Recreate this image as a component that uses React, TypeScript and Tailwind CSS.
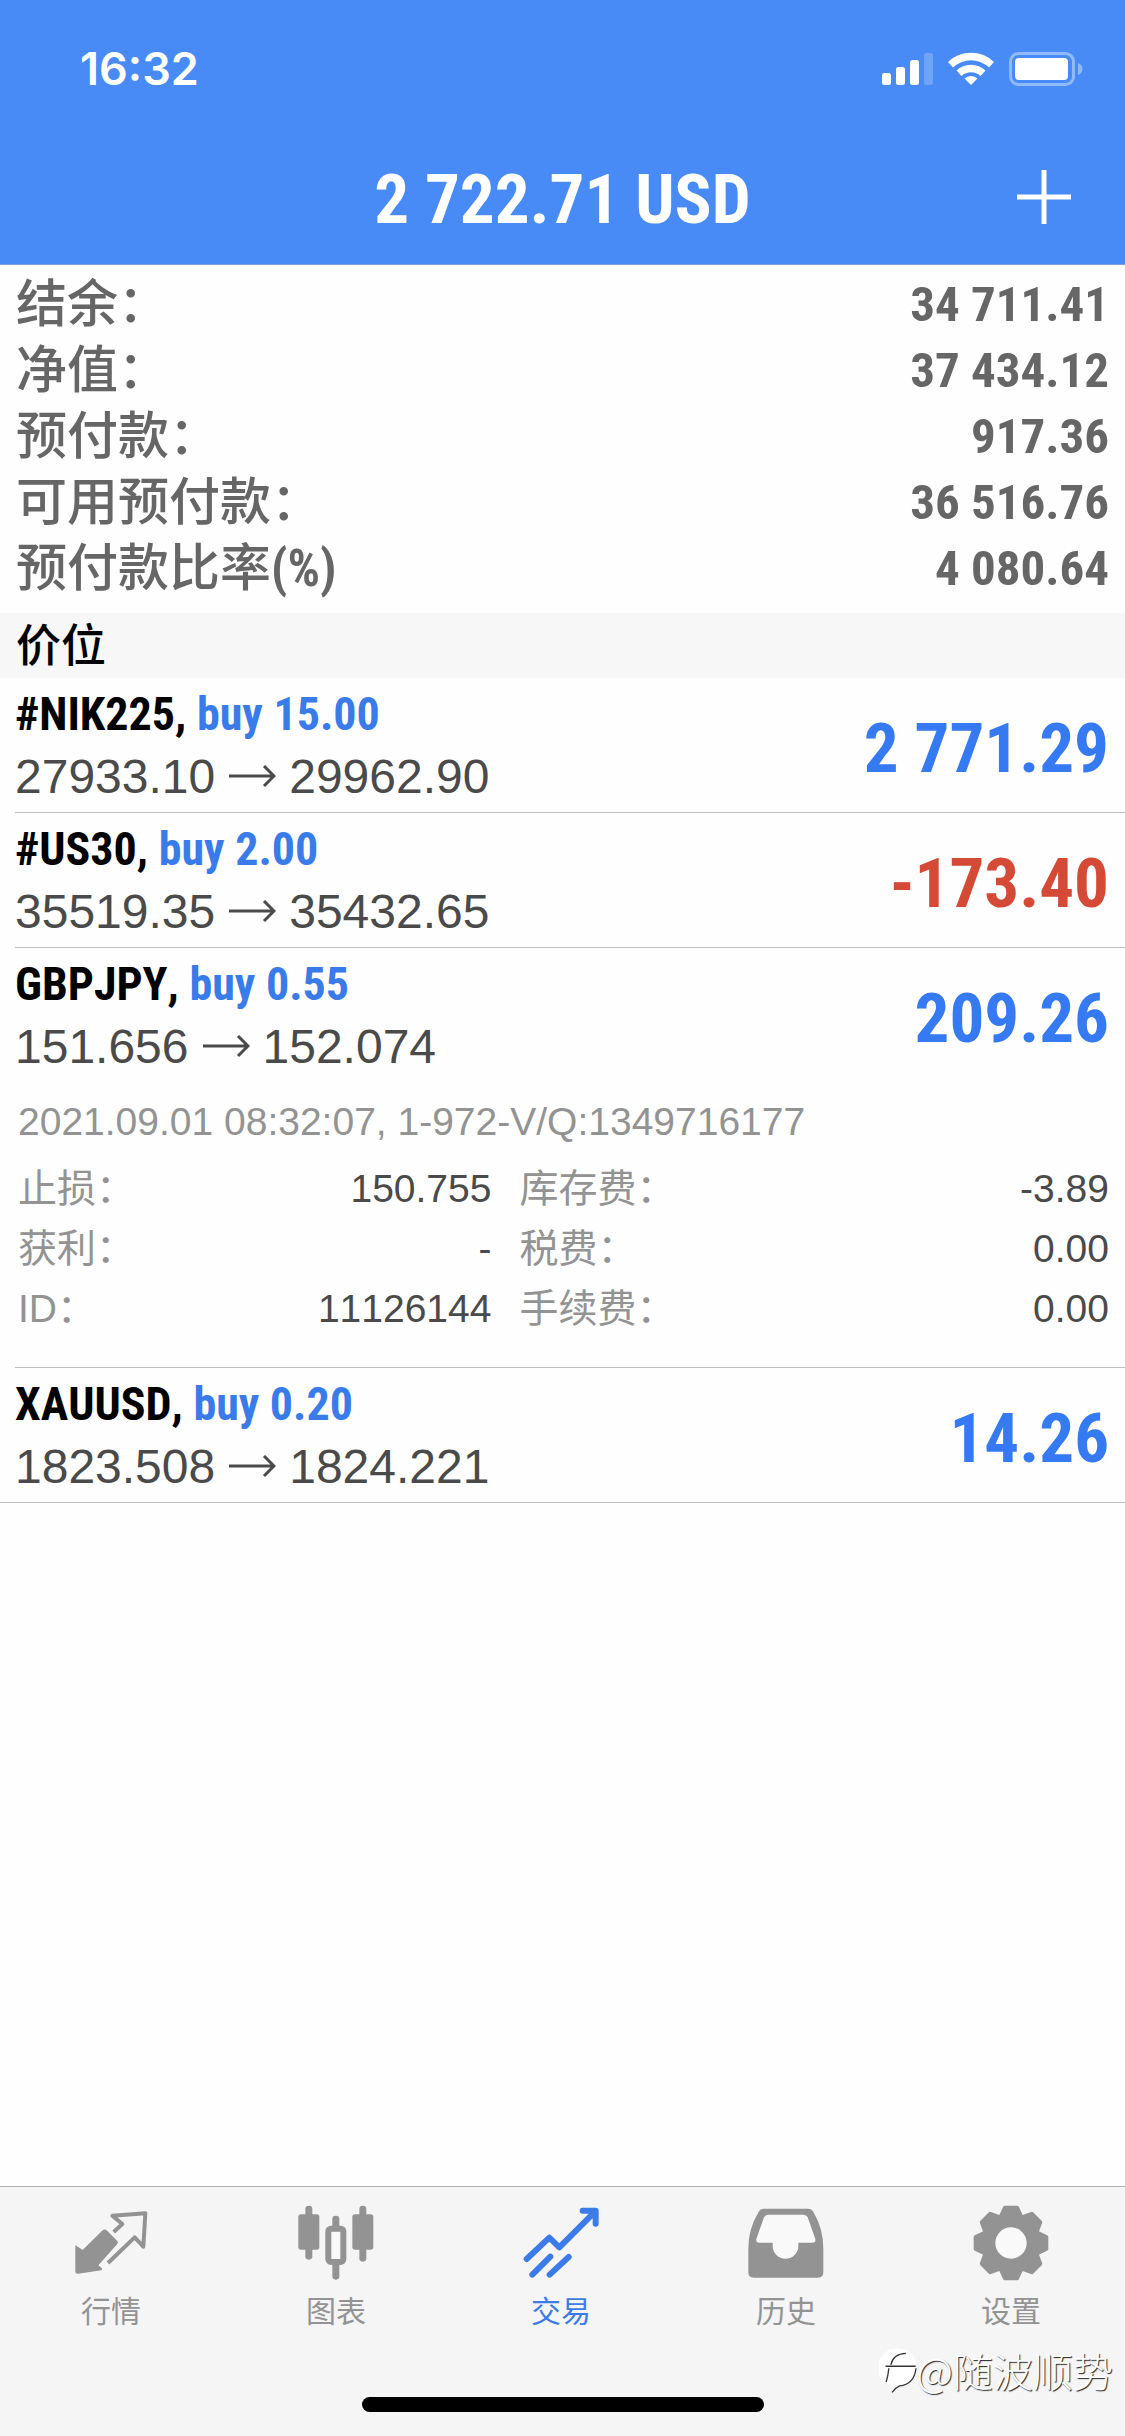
import { useState } from 'react';
import clsx from 'clsx';

interface Position {
  symbol: string;
  side: string;
  open: string;
  current: string;
  profit: string;
  note?: string;
  details?: [string, string][];
}

const summary = [
  { label: '结余：', value: '34 711.41' },
  { label: '净值：', value: '37 434.12' },
  { label: '预付款：', value: '917.36' },
  { label: '可用预付款：', value: '36 516.76' },
  { label: '预付款比率', unit: '(%)', value: '4 080.64' },
];

const positions: Position[] = [
  { symbol: '#NIK225', side: 'buy 15.00', open: '27933.10', current: '29962.90', profit: '2 771.29' },
  { symbol: '#US30', side: 'buy 2.00', open: '35519.35', current: '35432.65', profit: '-173.40' },
  {
    symbol: 'GBPJPY',
    side: 'buy 0.55',
    open: '151.656',
    current: '152.074',
    profit: '209.26',
    note: '2021.09.01 08:32:07, 1-972-V/Q:1349716177',
    details: [
      ['止损：', '150.755'],
      ['库存费：', '-3.89'],
      ['获利：', '-'],
      ['税费：', '0.00'],
      ['ID：', '11126144'],
      ['手续费：', '0.00'],
    ],
  },
  { symbol: 'XAUUSD', side: 'buy 0.20', open: '1823.508', current: '1824.221', profit: '14.26' },
];

const StatusIcons = () => (
  <svg width="202" height="36" viewBox="0 0 202 36" fill="#fff" aria-hidden="true">
    <rect x="0" y="22" width="9" height="12" rx="2.5" />
    <rect x="14" y="16" width="9" height="18" rx="2.5" />
    <rect x="28" y="9" width="9" height="25" rx="2.5" />
    <rect x="42" y="2" width="9" height="32" rx="2.5" opacity="0.22" />
    <path d="M66 11a33 33 0 0 1 46 0l-5 5.500a26 26 0 0 0 -36 0z" strokeLinejoin="round" />
    <path d="M74.500 19.500a21 21 0 0 1 29 0l-5 5.500a14 14 0 0 0 -19 0z" />
    <path d="M82.500 27.500a9.500 9.500 0 0 1 13 0l-6.500 6.500z" />
    <rect x="128.500" y="2.500" width="63" height="31" rx="8" fill="none" stroke="#fff" strokeWidth="3" opacity="0.4" />
    <rect x="133" y="7" width="53" height="22" rx="4" />
    <path d="M196 12c6 2 6 10 0 12z" opacity="0.4" />
  </svg>
);

const QuotesIcon = () => (
  <svg className="h-20 w-19" viewBox="219 100 228 240" aria-hidden="true">
    <path
      d="M226 229q0-4 4 0l18 12 60-59q6-5 12 0l32 32q4 5 0 9l-57 64 11 9q2 4-3 6l-68 10q-9 2-9-8z"
      fill="currentColor"
    />
    <path
      d="M341 187l26-24-30-25 99-7-6 100-26-28-80 77"
      fill="none"
      stroke="currentColor"
      strokeWidth="12"
      strokeLinejoin="round"
    />
  </svg>
);

const ChartIcon = () => (
  <svg className="h-20 w-19" viewBox="896 100 228 240" fill="currentColor" aria-hidden="true">
    <rect x="897" y="134" width="63" height="106" rx="8" />
    <rect x="918" y="108" width="21" height="162" rx="10" />
    <rect x="1059" y="134" width="63" height="106" rx="8" />
    <rect x="1080" y="108" width="21" height="168" rx="10" />
    <rect x="999" y="138" width="21" height="50" rx="10" />
    <rect x="999" y="270" width="21" height="60" rx="10" />
    <rect x="987" y="177" width="45" height="100" rx="8" fill="#f9f9f9" stroke="currentColor" strokeWidth="18" />
  </svg>
);

const TradeIcon = () => (
  <svg
    className="h-20 w-19"
    viewBox="220 100 228 240"
    fill="none"
    stroke="currentColor"
    strokeWidth="18"
    strokeLinecap="round"
    strokeLinejoin="round"
    aria-hidden="true"
  >
    <path d="M231 268l68-64 30 29 108-108M399 123h39v39M248 315l54-54M300 315l57-53" />
  </svg>
);

const HistoryIcon = () => (
  <svg className="h-20 w-19" viewBox="896 100 228 240" aria-hidden="true">
    <path
      d="M942 117h136q9 0 14 9 30 52 30 110v72q0 16-16 16h-193q-16 0-16-16v-72q0-58 31-110 5-9 14-9z"
      fill="currentColor"
    />
    <path
      d="M956 135h107q8 0 12 8l23 65q2 11-9 11h-42v10a38 38 0 0 1-77 0v-10h-40q-11 0-9-11l23-65q4-8 12-8z"
      fill="#f9f9f9"
    />
  </svg>
);

const SettingsIcon = () => (
  <svg className="h-20 w-19" viewBox="445 100 228 240" aria-hidden="true">
    <g fill="currentColor" stroke="currentColor" strokeWidth="12" strokeLinejoin="round">
      <circle cx="559" cy="220" r="80" />
      {[0, 45, 90, 135, 180, 225, 270, 315].map((angle) => (
        <path key={angle} d="M541 114h36l14 30v20h-64v-20z" transform={`rotate(${angle} 559 220)`} />
      ))}
    </g>
    <circle cx="559" cy="220" r="47" fill="#f9f9f9" />
  </svg>
);

const tabs = [
  { name: '行情', Icon: QuotesIcon },
  { name: '图表', Icon: ChartIcon },
  { name: '交易', Icon: TradeIcon },
  { name: '历史', Icon: HistoryIcon },
  { name: '设置', Icon: SettingsIcon },
];

const narrow = "font-['Roboto_Condensed','Liberation_Sans',sans-serif] font-bold";

const App = () => {
  const [expanded, setExpanded] = useState<string | null>('GBPJPY');
  const [tab, setTab] = useState('交易');

  return (
    <div className="flex min-h-screen flex-col bg-[#fefefe] font-['Liberation_Sans','Noto_Sans_CJK_SC',sans-serif] [font-kerning:none]">
      <header className="border-b border-[#7d9fd8] bg-[#488bf6] text-white">
        <div className="flex h-[138px] items-center justify-between pr-[41px] pl-20">
          <span className="font-['Inter',sans-serif] text-[45px] font-semibold">16:32</span>
          <StatusIcons />
        </div>
        <div className="grid h-[126px] grid-cols-[1fr_auto_1fr] items-start pt-[26px]">
          <h1 className={clsx(narrow, 'col-start-2 text-[69px] leading-[72px]')}>2 722.71 USD</h1>
          <button type="button" aria-label="新订单" className="mr-[53px] justify-self-end pt-[5px]">
            <svg width="56" height="56" viewBox="0 0 56 56" stroke="#fff" strokeWidth="5" aria-hidden="true">
              <path d="M28 1v54M1 28h54" />
            </svg>
          </button>
        </div>
      </header>

      <main className="flex-1">
        <dl className="px-4 pt-[7px] pb-[11px] text-[#666]">
          {summary.map((row) => (
            <div key={row.label} className="flex h-[66px] items-center justify-between">
              <dt className="text-[51px] leading-[66px] font-medium">
                {row.label}
                {row.unit && <span className={narrow}>{row.unit}</span>}
              </dt>
              <dd className={clsx(narrow, 'text-[49px] leading-[66px]')}>{row.value}</dd>
            </div>
          ))}
        </dl>

        <h2 className="bg-[#f7f7f7] px-4 pt-[2px] text-[45px] leading-[63px] font-medium text-black">价位</h2>

        <ul className="border-b border-[#bebfc1]">
          {positions.map((p, i) => (
            <li key={p.symbol} className="pl-[15px]">
              <div className={clsx('pr-4', i < positions.length - 1 && 'border-b border-[#bebfc1]')}>
                <button
                  type="button"
                  onClick={() => setExpanded(expanded === p.symbol ? null : p.symbol)}
                  className="flex h-[134px] w-full items-center justify-between text-left"
                >
                  <span className="flex flex-col">
                    <span className={clsx(narrow, 'text-[46px] leading-[64px] text-black')}>
                      {p.symbol}, <span className="text-[#3a7bea]">{p.side}</span>
                    </span>
                    <span className="flex items-center text-[48px] leading-[62px] text-[#4a4a4a]">
                      {p.open}
                      <svg width="48" height="24" viewBox="0 0 48 24" fill="none" stroke="currentColor" strokeWidth="3" className="mx-[13px]" aria-hidden="true">
                        <path d="M1 11h45M36 1l10 10-10 10" />
                      </svg>
                      {p.current}
                    </span>
                  </span>
                  <span
                    className={clsx(
                      narrow,
                      'pt-2 text-[69px] leading-[72px]',
                      p.profit.startsWith('-') ? 'text-[#d44a36]' : 'text-[#357af3]'
                    )}
                  >
                    {p.profit}
                  </span>
                </button>
                {p.details && expanded === p.symbol && (
                  <div className="pt-[10px] pb-7 pl-[3px] text-[39px] leading-[60px] text-[#939393]">
                    <p className="pb-[7px]">{p.note}</p>
                    <dl className="grid grid-cols-[473fr_589fr] gap-x-7">
                      {p.details.map(([label, value]) => (
                        <div key={label} className="flex h-[60px] justify-between">
                          <dt>{label}</dt>
                          <dd className="text-[#4a4a4a]">{value}</dd>
                        </div>
                      ))}
                    </dl>
                  </div>
                )}
              </div>
            </li>
          ))}
        </ul>
      </main>

      <footer className="relative border-t border-[#b2b2b2] bg-[#f5f5f5]">
        <nav className="grid grid-cols-5 pt-4">
          {tabs.map(({ name, Icon }) => (
            <button
              key={name}
              type="button"
              onClick={() => setTab(name)}
              className={clsx(
                'flex flex-col items-center gap-[10px] pr-[3px]',
                tab === name ? 'text-[#3b7bea]' : 'text-[#939393]'
              )}
            >
              <Icon />
              <span className="text-[30px] leading-[38px]">{name}</span>
            </button>
          ))}
        </nav>
        <div className="flex h-[105px] items-end justify-center pb-6">
          <div className="h-[15px] w-[402px] rounded-full bg-black" />
        </div>
        {/* author stamp floats above the tab bar */}
        <div className="absolute right-3 bottom-[38px] flex items-center text-white">
          <svg width="38" height="47" viewBox="8 20 116 142" aria-hidden="true">
            <path d="M66 24a54 54 0 0 1 56 54q-2 56-50 62l-24 18q2-14 0-20a58 58 0 0 1 18-114z" fill="#fff" />
            <path
              d="M28 78h92M44 74q8-34 46-35M38 84q-2 22-8 42M121 84q-6 50-50 54-14 6-23 20"
              fill="none"
              stroke="#333"
              strokeWidth="4"
            />
          </svg>
          <span className="font-['Noto_Sans_CJK_SC',sans-serif] text-[40px] leading-[56px] font-light [text-shadow:1px_1px_1px_#222]">
            @随波顺势
          </span>
        </div>
      </footer>
    </div>
  );
};

export default App;
